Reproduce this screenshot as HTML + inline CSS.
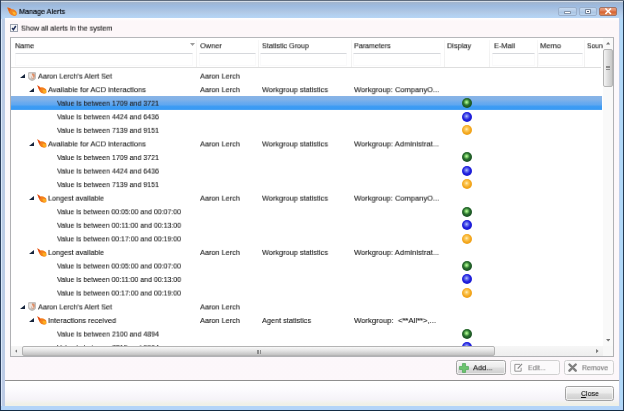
<!DOCTYPE html>
<html><head><meta charset="utf-8"><title>Manage Alerts</title>
<style>
html,body{margin:0;padding:0;}
body{width:624px;height:411px;overflow:hidden;position:relative;background:#b6d3f3;font-family:"Liberation Sans",sans-serif;font-size:8.1px;}
div,span,svg{position:absolute;box-sizing:border-box;}
.t{-webkit-text-stroke:0.12px currentColor;will-change:transform;white-space:nowrap;line-height:12px;height:12px;transform-origin:0 50%;font-size:8.1px;}
#frame{left:0;top:0;width:624px;height:411px;background:#24384f;}
#frame2{left:1px;top:1px;width:621.8px;height:408.9px;background:#dbe8fa;}
#frame3{left:2.2px;top:2px;width:620.5px;height:407.9px;background:linear-gradient(90deg,#bccbe5 0,#bccbe5 4px,#c0d0ec 4px,#c0d0ec 618.3px,#b0d8f8 618.3px);}
#title{left:1px;top:0.7px;width:622px;height:18px;background:linear-gradient(#d4dde8 0,#d4dde8 1px,#a2b5ce 1.2px,#9dbbe0 5px,#a6c1e2 8px,#b1c8e5 11px,#b4d2f2 15px,#b9d6f4 18px);}
#client{left:4.8px;top:18.4px;width:614.2px;height:387.2px;background:linear-gradient(#ffffff 0,#fdf7f9 3px,#fdf7f9 20px,#fcf8fb 60px,#fcf7fa 100%);}
#bottom{left:4.8px;top:380.6px;width:614.2px;height:25px;background:linear-gradient(#ffffff 0,#fbfafd 40%,#f5f3f8 75%,#f0f0e6 92%,#eef0ea 100%);}
#sep{left:4.8px;top:379.6px;width:614.2px;height:1.1px;background:#8e8e8e;}
#grid{left:10px;top:37.3px;width:604px;height:319.9px;background:#fff;border:1px solid #b0b1b4;border-top-color:#b6b7ba;}
#hdrline{left:11px;top:67.4px;width:590px;height:1px;background:#dedede;}
.fb{top:53px;height:12.6px;border:1px solid #fafafb;border-top-color:#d6d8dc;background:#fff;}
.cs{top:40px;height:27.4px;width:1px;background:linear-gradient(#f8f8f8,#f2f2f2 50%,#f0f0f0);}
#sel{left:11px;top:96.2px;width:591.4px;height:13.6px;background:linear-gradient(#88b4e6 0,#82b2e8 25%,#6aaaee 48%,#60a7f0 62%,#3f9cf3 74%,#399af4 90%,#52a5f2 100%);}
.tri{width:0;height:0;border-left:5.2px solid transparent;border-bottom:4.8px solid #16243c;}
.dot{width:10px;height:10px;border-radius:50%;}
.dot.g{background:radial-gradient(circle at 46% 42%,#c4f7aa 0,#86d870 15%,#2c7430 38%,#1c5624 62%,#184a20 100%);}
.dot.b{background:radial-gradient(circle at 46% 42%,#b9c4fa 0,#6d78ee 18%,#2020de 46%,#1515c8 100%);}
.dot.o{background:radial-gradient(circle at 46% 42%,#fff0c4 0,#fdcc60 20%,#f3a71e 52%,#ea9812 100%);}
#vsb{left:602.6px;top:38.3px;width:10.4px;height:308px;background:#f9f9f9;}
#vth{left:603.3px;top:48.6px;width:9.8px;height:38.6px;border:1px solid #b4b4b4;border-radius:2px;background:linear-gradient(90deg,#f4f4f4,#dcdcdc 50%,#c8c8c8);}
#hsb{left:11px;top:345.9px;width:592px;height:10.4px;background:linear-gradient(#f6f6f6,#eeeeee);}
#hth{left:21.8px;top:346.3px;width:473.2px;height:10.2px;border:1px solid #b4b4b4;border-radius:2px;background:linear-gradient(#f8f8f8,#e4e4e4 45%,#c2c2c2);}
#corner{left:602.6px;top:345.9px;width:10.4px;height:10.4px;background:#f7f7f7;}
.btn{height:15.9px;border:1px solid #a2a2a2;border-radius:2.5px;background:linear-gradient(#f5f5f5,#ececec 45%,#dddddd 55%,#cecece);box-shadow:inset 0 0 0 1px rgba(255,255,255,.6);}
.btn.dis{border-color:#d0d0d0;background:#fbfafb;box-shadow:none;}
.wb{top:6.7px;height:9.5px;border:1px solid #9bb0cc;border-radius:2px;}
.tl{left:0;top:0;width:624px;height:411px;}

</style></head>
<body>
<div id="frame"></div><div id="frame2"></div><div id="frame3"></div>
<div id="title"></div>
<div style="left:0;top:0;width:624px;height:0.8px;background:#5f6c7e"></div>
<div style="left:0;top:0;width:1px;height:411px;background:#2c3e5c"></div>
<div style="left:1px;top:405.6px;width:621.7px;height:4.3px;background:#b3d4f8"></div>
<div style="left:0;top:409.8px;width:624px;height:1.2px;background:#132c44"></div>
<svg style="left:6.8px;top:6.8px" width="10.4" height="9.4" viewBox="0 0 10 9"><path d="M0.3 0.5 Q2.8 0.6 4.4 2 Q6.6 2 8.6 3.8 Q9.9 5.4 9.3 7.4 Q8.4 8.9 6 8.5 Q3.4 8 2.2 5.8 Q1 3.4 0.3 0.5 Z" fill="#ee8426"/><path d="M0.3 0.5 Q2.6 0.8 4 2.2 Q3 3 2.6 4.6 Q1.2 3 0.3 0.5 Z" fill="#e0601e"/><path d="M5 4.2 Q7.6 4.2 8.6 6 Q8.8 7.6 7.2 7.8 Q5.6 7.2 5 4.2 Z" fill="#ffb52a"/></svg>
<div class="wb" style="left:558.4px;width:18.2px;background:linear-gradient(#c6daf0,#b2cae6 50%,#a4c0e0 52%,#bcd5ef)"></div>
<div style="left:564px;top:11.3px;width:7px;height:2.6px;background:#fff;border:0.6px solid #8393a8;border-radius:0.5px"></div>
<div class="wb" style="left:579px;width:18px;background:linear-gradient(#c6daf0,#b2cae6 50%,#a4c0e0 52%,#bcd5ef)"></div>
<div style="left:584.8px;top:9.3px;width:6.4px;height:4.8px;background:#f4f6f9;border:0.7px solid #76869c;border-radius:0.8px"></div>
<div style="left:586.7px;top:11.1px;width:2.6px;height:1.2px;background:#4a566a"></div>
<div class="wb" style="left:599.3px;width:18.2px;background:linear-gradient(#e9a485,#e08058 45%,#d6602f 55%,#e08a58);border-color:#a07468"></div>
<svg style="left:605.3px;top:8.4px" width="6.4" height="6.4" viewBox="0 0 8 8"><path d="M1.2 1.2 L6.8 6.8 M6.8 1.2 L1.2 6.8" stroke="#fff" stroke-width="1.9" stroke-linecap="square"/></svg>
<div id="client"></div>
<div id="bottom"></div><div id="sep"></div>
<div style="left:10.1px;top:24px;width:7.8px;height:7.8px;border:0.9px solid #9ea3b0;background:#f6f6f8"></div>
<svg style="left:10.1px;top:24px" width="8" height="8" viewBox="0 0 8 8"><path d="M2.1 4 L3.4 5.7 L5.8 2" fill="none" stroke="#26335e" stroke-width="1.5"/></svg>
<div id="grid"></div>
<div id="hdrline"></div>
<div class="fb" style="left:14.6px;width:178.6px"></div>
<div class="fb" style="left:199px;width:56.6px"></div>
<div class="fb" style="left:260.2px;width:87px"></div>
<div class="fb" style="left:353px;width:87.6px"></div>
<div class="fb" style="left:491.6px;width:43.6px"></div>
<div class="fb" style="left:538.4px;width:44.2px"></div>
<div class="cs" style="left:196.4px"></div><div class="cs" style="left:258px"></div><div class="cs" style="left:350.6px"></div><div class="cs" style="left:444.4px"></div><div class="cs" style="left:489px"></div><div class="cs" style="left:536.8px"></div><div class="cs" style="left:584px"></div>
<svg style="left:190.4px;top:42.8px" width="5" height="3" viewBox="0 0 5 3"><path d="M0 0 L5 0 L2.5 3 Z" fill="#9c9c9c"/></svg>
<div id="sel"></div>
<div class="tri" style="left:20.2px;top:74.10px"></div>
<svg class="ic" style="left:28px;top:71.60px" width="8" height="9" viewBox="0 0 8 9"><path d="M1 0.5 H7 Q7.7 0.5 7.7 1.3 V6 Q7.4 7.8 4.2 8.7 Q1 7.8 0.4 6 V1.3 Q0.4 0.5 1 0.5 Z" fill="#c4c0bc" stroke="#a9a5a2" stroke-width="0.5"/><path d="M1.2 1.4 H4 L3.2 6.6 Q1.6 6 1.2 5 Z" fill="#ece6e2"/><path d="M4 1.6 Q6.2 1.6 6.8 3 Q7 5.4 5 7.2 Q3.6 6.6 3.6 4.8 Z" fill="#e08e68"/><path d="M3.6 2 L5.6 5.4 L4.6 6.6 L3 3.4 Z" fill="#f6eee8" opacity="0.85"/></svg>
<div class="tri" style="left:29.4px;top:87.66px"></div>
<svg class="ic" style="left:36.8px;top:85.06px" width="10" height="9" viewBox="0 0 10 9"><path d="M0.3 0.2 Q2.2 1 3.4 2.4 Q5 1.8 6.2 2.6 Q8.4 3.4 9.2 4.6 Q9.6 6.4 9.3 8 Q7.8 8.9 6.2 8.6 Q4.2 8.2 3 6.8 Q1.6 4.4 0.3 0.2 Z" fill="#f4801c"/><path d="M0.3 0.2 Q2.2 1.2 3.6 3 Q3.2 4.2 3 5.8 Q1.6 3.6 0.3 0.2 Z" fill="#e2481c"/><path d="M5.6 4.8 Q7.6 4.4 9 5.6 Q9.4 7 9 7.8 Q7.4 8.4 6.2 7.6 Q5.4 6.4 5.6 4.8 Z" fill="#fcae1e"/></svg>
<div class="dot g" style="left:461.9px;top:98.12px"></div>
<div class="dot b" style="left:461.9px;top:111.68px"></div>
<div class="dot o" style="left:461.9px;top:125.24px"></div>
<div class="tri" style="left:29.4px;top:141.90px"></div>
<svg class="ic" style="left:36.8px;top:139.30px" width="10" height="9" viewBox="0 0 10 9"><path d="M0.3 0.2 Q2.2 1 3.4 2.4 Q5 1.8 6.2 2.6 Q8.4 3.4 9.2 4.6 Q9.6 6.4 9.3 8 Q7.8 8.9 6.2 8.6 Q4.2 8.2 3 6.8 Q1.6 4.4 0.3 0.2 Z" fill="#f4801c"/><path d="M0.3 0.2 Q2.2 1.2 3.6 3 Q3.2 4.2 3 5.8 Q1.6 3.6 0.3 0.2 Z" fill="#e2481c"/><path d="M5.6 4.8 Q7.6 4.4 9 5.6 Q9.4 7 9 7.8 Q7.4 8.4 6.2 7.6 Q5.4 6.4 5.6 4.8 Z" fill="#fcae1e"/></svg>
<div class="dot g" style="left:461.9px;top:152.36px"></div>
<div class="dot b" style="left:461.9px;top:165.92px"></div>
<div class="dot o" style="left:461.9px;top:179.48px"></div>
<div class="tri" style="left:29.4px;top:196.14px"></div>
<svg class="ic" style="left:36.8px;top:193.54px" width="10" height="9" viewBox="0 0 10 9"><path d="M0.3 0.2 Q2.2 1 3.4 2.4 Q5 1.8 6.2 2.6 Q8.4 3.4 9.2 4.6 Q9.6 6.4 9.3 8 Q7.8 8.9 6.2 8.6 Q4.2 8.2 3 6.8 Q1.6 4.4 0.3 0.2 Z" fill="#f4801c"/><path d="M0.3 0.2 Q2.2 1.2 3.6 3 Q3.2 4.2 3 5.8 Q1.6 3.6 0.3 0.2 Z" fill="#e2481c"/><path d="M5.6 4.8 Q7.6 4.4 9 5.6 Q9.4 7 9 7.8 Q7.4 8.4 6.2 7.6 Q5.4 6.4 5.6 4.8 Z" fill="#fcae1e"/></svg>
<div class="dot g" style="left:461.9px;top:206.60px"></div>
<div class="dot b" style="left:461.9px;top:220.16px"></div>
<div class="dot o" style="left:461.9px;top:233.72px"></div>
<div class="tri" style="left:29.4px;top:250.38px"></div>
<svg class="ic" style="left:36.8px;top:247.78px" width="10" height="9" viewBox="0 0 10 9"><path d="M0.3 0.2 Q2.2 1 3.4 2.4 Q5 1.8 6.2 2.6 Q8.4 3.4 9.2 4.6 Q9.6 6.4 9.3 8 Q7.8 8.9 6.2 8.6 Q4.2 8.2 3 6.8 Q1.6 4.4 0.3 0.2 Z" fill="#f4801c"/><path d="M0.3 0.2 Q2.2 1.2 3.6 3 Q3.2 4.2 3 5.8 Q1.6 3.6 0.3 0.2 Z" fill="#e2481c"/><path d="M5.6 4.8 Q7.6 4.4 9 5.6 Q9.4 7 9 7.8 Q7.4 8.4 6.2 7.6 Q5.4 6.4 5.6 4.8 Z" fill="#fcae1e"/></svg>
<div class="dot g" style="left:461.9px;top:260.84px"></div>
<div class="dot b" style="left:461.9px;top:274.40px"></div>
<div class="dot o" style="left:461.9px;top:287.96px"></div>
<div class="tri" style="left:20.2px;top:304.62px"></div>
<svg class="ic" style="left:28px;top:302.12px" width="8" height="9" viewBox="0 0 8 9"><path d="M1 0.5 H7 Q7.7 0.5 7.7 1.3 V6 Q7.4 7.8 4.2 8.7 Q1 7.8 0.4 6 V1.3 Q0.4 0.5 1 0.5 Z" fill="#c4c0bc" stroke="#a9a5a2" stroke-width="0.5"/><path d="M1.2 1.4 H4 L3.2 6.6 Q1.6 6 1.2 5 Z" fill="#ece6e2"/><path d="M4 1.6 Q6.2 1.6 6.8 3 Q7 5.4 5 7.2 Q3.6 6.6 3.6 4.8 Z" fill="#e08e68"/><path d="M3.6 2 L5.6 5.4 L4.6 6.6 L3 3.4 Z" fill="#f6eee8" opacity="0.85"/></svg>
<div class="tri" style="left:29.4px;top:318.18px"></div>
<svg class="ic" style="left:36.8px;top:315.58px" width="10" height="9" viewBox="0 0 10 9"><path d="M0.3 0.2 Q2.2 1 3.4 2.4 Q5 1.8 6.2 2.6 Q8.4 3.4 9.2 4.6 Q9.6 6.4 9.3 8 Q7.8 8.9 6.2 8.6 Q4.2 8.2 3 6.8 Q1.6 4.4 0.3 0.2 Z" fill="#f4801c"/><path d="M0.3 0.2 Q2.2 1.2 3.6 3 Q3.2 4.2 3 5.8 Q1.6 3.6 0.3 0.2 Z" fill="#e2481c"/><path d="M5.6 4.8 Q7.6 4.4 9 5.6 Q9.4 7 9 7.8 Q7.4 8.4 6.2 7.6 Q5.4 6.4 5.6 4.8 Z" fill="#fcae1e"/></svg>
<div class="dot g" style="left:461.9px;top:328.64px"></div>
<div class="dot b" style="left:461.9px;top:342.20px"></div>
<div class="tl">
<span class="t" style="left:15.0px;top:40px;color:#1a1a1a;transform:translateY(0.20px) scaleX(0.8891);">Name</span>
<span class="t" style="left:200.3px;top:40px;color:#1a1a1a;transform:translateY(0.20px) scaleX(0.9101);">Owner</span>
<span class="t" style="left:262.0px;top:40px;color:#1a1a1a;transform:translateY(0.20px) scaleX(0.8852);">Statistic Group</span>
<span class="t" style="left:354.3px;top:40px;color:#1a1a1a;transform:translateY(0.20px) scaleX(0.8771);">Parameters</span>
<span class="t" style="left:447.0px;top:40px;color:#1a1a1a;transform:translateY(0.20px) scaleX(0.9041);">Display</span>
<span class="t" style="left:494.0px;top:40px;color:#1a1a1a;transform:translateY(0.20px) scaleX(0.9155);">E-Mail</span>
<span class="t" style="left:540.0px;top:40px;color:#1a1a1a;transform:translateY(0.20px) scaleX(0.9333);">Memo</span>
<span class="t" style="left:587.0px;top:40px;color:#1a1a1a;transform:translateY(0.20px) scaleX(0.8198);">Sound</span>
<span class="t" style="left:38.2px;top:70px;color:#1a1a1a;transform:translateY(0.60px) scaleX(0.8966);white-space:pre;">Aaron Lerch&#x27;s Alert Set</span>
<span class="t" style="left:200.3px;top:70px;color:#1a1a1a;transform:translateY(0.60px) scaleX(0.9072);">Aaron Lerch</span>
<span class="t" style="left:47.6px;top:84px;color:#1a1a1a;transform:translateY(0.16px) scaleX(0.9166);white-space:pre;">Available for ACD interactions</span>
<span class="t" style="left:200.3px;top:84px;color:#1a1a1a;transform:translateY(0.16px) scaleX(0.9072);">Aaron Lerch</span>
<span class="t" style="left:262.2px;top:84px;color:#1a1a1a;transform:translateY(0.16px) scaleX(0.9076);">Workgroup statistics</span>
<span class="t" style="left:354.3px;top:84px;color:#1a1a1a;transform:translateY(0.16px) scaleX(0.9310);white-space:pre;">Workgroup: CompanyO...</span>
<span class="t" style="left:57.2px;top:97px;color:#1a1a1a;transform:translateY(0.72px) scaleX(0.8695);white-space:pre;">Value is between 1709 and 3721</span>
<span class="t" style="left:57.2px;top:111px;color:#1a1a1a;transform:translateY(0.28px) scaleX(0.8695);white-space:pre;">Value is between 4424 and 6436</span>
<span class="t" style="left:57.2px;top:124px;color:#1a1a1a;transform:translateY(0.84px) scaleX(0.8695);white-space:pre;">Value is between 7139 and 9151</span>
<span class="t" style="left:47.6px;top:138px;color:#1a1a1a;transform:translateY(0.40px) scaleX(0.9166);white-space:pre;">Available for ACD interactions</span>
<span class="t" style="left:200.3px;top:138px;color:#1a1a1a;transform:translateY(0.40px) scaleX(0.9072);">Aaron Lerch</span>
<span class="t" style="left:262.2px;top:138px;color:#1a1a1a;transform:translateY(0.40px) scaleX(0.9076);">Workgroup statistics</span>
<span class="t" style="left:354.3px;top:138px;color:#1a1a1a;transform:translateY(0.40px) scaleX(0.9370);white-space:pre;">Workgroup: Administrat...</span>
<span class="t" style="left:57.2px;top:151px;color:#1a1a1a;transform:translateY(0.96px) scaleX(0.8695);white-space:pre;">Value is between 1709 and 3721</span>
<span class="t" style="left:57.2px;top:165px;color:#1a1a1a;transform:translateY(0.52px) scaleX(0.8695);white-space:pre;">Value is between 4424 and 6436</span>
<span class="t" style="left:57.2px;top:179px;color:#1a1a1a;transform:translateY(0.08px) scaleX(0.8695);white-space:pre;">Value is between 7139 and 9151</span>
<span class="t" style="left:47.6px;top:192px;color:#1a1a1a;transform:translateY(0.64px) scaleX(0.8889);white-space:pre;">Longest available</span>
<span class="t" style="left:200.3px;top:192px;color:#1a1a1a;transform:translateY(0.64px) scaleX(0.9072);">Aaron Lerch</span>
<span class="t" style="left:262.2px;top:192px;color:#1a1a1a;transform:translateY(0.64px) scaleX(0.9076);">Workgroup statistics</span>
<span class="t" style="left:354.3px;top:192px;color:#1a1a1a;transform:translateY(0.64px) scaleX(0.9310);white-space:pre;">Workgroup: CompanyO...</span>
<span class="t" style="left:57.2px;top:206px;color:#1a1a1a;transform:translateY(0.20px) scaleX(0.8592);white-space:pre;">Value is between 00:05:00 and 00:07:00</span>
<span class="t" style="left:57.2px;top:219px;color:#1a1a1a;transform:translateY(0.76px) scaleX(0.8629);white-space:pre;">Value is between 00:11:00 and 00:13:00</span>
<span class="t" style="left:57.2px;top:233px;color:#1a1a1a;transform:translateY(0.32px) scaleX(0.8592);white-space:pre;">Value is between 00:17:00 and 00:19:00</span>
<span class="t" style="left:47.6px;top:246px;color:#1a1a1a;transform:translateY(0.88px) scaleX(0.8889);white-space:pre;">Longest available</span>
<span class="t" style="left:200.3px;top:246px;color:#1a1a1a;transform:translateY(0.88px) scaleX(0.9072);">Aaron Lerch</span>
<span class="t" style="left:262.2px;top:246px;color:#1a1a1a;transform:translateY(0.88px) scaleX(0.9076);">Workgroup statistics</span>
<span class="t" style="left:354.3px;top:246px;color:#1a1a1a;transform:translateY(0.88px) scaleX(0.9370);white-space:pre;">Workgroup: Administrat...</span>
<span class="t" style="left:57.2px;top:260px;color:#1a1a1a;transform:translateY(0.44px) scaleX(0.8592);white-space:pre;">Value is between 00:05:00 and 00:07:00</span>
<span class="t" style="left:57.2px;top:274px;color:#1a1a1a;transform:translateY(0.00px) scaleX(0.8629);white-space:pre;">Value is between 00:11:00 and 00:13:00</span>
<span class="t" style="left:57.2px;top:287px;color:#1a1a1a;transform:translateY(0.56px) scaleX(0.8592);white-space:pre;">Value is between 00:17:00 and 00:19:00</span>
<span class="t" style="left:38.2px;top:301px;color:#1a1a1a;transform:translateY(0.42px) scaleX(0.8966);white-space:pre;">Aaron Lerch&#x27;s Alert Set</span>
<span class="t" style="left:200.3px;top:301px;color:#1a1a1a;transform:translateY(0.42px) scaleX(0.9072);">Aaron Lerch</span>
<span class="t" style="left:47.6px;top:314px;color:#1a1a1a;transform:translateY(0.98px) scaleX(0.9105);white-space:pre;">Interactions received</span>
<span class="t" style="left:200.3px;top:314px;color:#1a1a1a;transform:translateY(0.98px) scaleX(0.9072);">Aaron Lerch</span>
<span class="t" style="left:262.2px;top:314px;color:#1a1a1a;transform:translateY(0.98px) scaleX(0.9001);">Agent statistics</span>
<span class="t" style="left:354.3px;top:314px;color:#1a1a1a;transform:translateY(0.98px) scaleX(0.9509);white-space:pre;">Workgroup:  &lt;**All**&gt;,...</span>
<span class="t" style="left:57.2px;top:328px;color:#1a1a1a;transform:translateY(0.54px) scaleX(0.8695);white-space:pre;">Value is between 2100 and 4894</span>
<span class="t" style="left:57.2px;top:342px;color:#1a1a1a;transform:translateY(0.10px) scaleX(0.8695);white-space:pre;">Value is between 7315 and 9904</span>
</div>
<div id="vsb"></div><div id="vth"></div>
<svg style="left:606px;top:42.2px" width="4.4" height="2.6" viewBox="0 0 5 3"><path d="M0 3 L5 3 L2.5 0 Z" fill="#747474"/></svg>
<svg style="left:606px;top:339px" width="4.4" height="2.6" viewBox="0 0 5 3"><path d="M0 0 L5 0 L2.5 3 Z" fill="#747474"/></svg>
<div style="left:606px;top:65.6px;width:4px;height:0.8px;background:#8c8c8c"></div><div style="left:606px;top:67.2px;width:4px;height:0.8px;background:#8c8c8c"></div><div style="left:606px;top:68.8px;width:4px;height:0.8px;background:#8c8c8c"></div>
<div id="hsb"></div><div id="hth"></div><div id="corner"></div>
<svg style="left:14.8px;top:349.4px" width="2.6" height="4.2" viewBox="0 0 3 5"><path d="M3 0 L3 5 L0 2.5 Z" fill="#747474"/></svg>
<svg style="left:596.4px;top:349.4px" width="2.6" height="4.2" viewBox="0 0 3 5"><path d="M0 0 L0 5 L3 2.5 Z" fill="#747474"/></svg>
<div style="left:256.6px;top:349.5px;width:0.8px;height:4px;background:#8c8c8c"></div><div style="left:258.2px;top:349.5px;width:0.8px;height:4px;background:#8c8c8c"></div><div style="left:259.8px;top:349.5px;width:0.8px;height:4px;background:#8c8c8c"></div>

<div class="btn" style="left:455.8px;top:359.6px;width:50px"></div>
<svg style="left:459px;top:362.6px" width="10" height="10" viewBox="0 0 11 11"><path d="M3.8 0.6 H7.2 V3.8 H10.4 V7.2 H7.2 V10.4 H3.8 V7.2 H0.6 V3.8 H3.8 Z" fill="#6cc46e" stroke="#4ea75a" stroke-width="0.8"/></svg>
<div class="btn dis" style="left:510.4px;top:359.6px;width:49.6px"></div>
<svg style="left:514px;top:363px" width="9.4" height="9.4" viewBox="0 0 11 11"><path d="M1 1.6 H7 M1 1.6 V9.6 H8.4 V5.6" fill="none" stroke="#8e8e8e" stroke-width="1.1"/><path d="M4.4 6.6 L9.4 1" stroke="#888" stroke-width="1.4"/></svg>
<div class="btn dis" style="left:564.4px;top:359.6px;width:49.6px"></div>
<svg style="left:568px;top:363px" width="9.2" height="9.2" viewBox="0 0 10 10"><path d="M1.6 1.6 L8.4 8.4 M8.4 1.6 L1.6 8.4" stroke="#808080" stroke-width="2.6" stroke-linecap="round"/></svg>
<div class="btn" style="left:564.5px;top:385.5px;width:49.4px;height:15.1px"></div>
<div class="tl">
<span class="t" style="left:18.9px;top:5px;color:#060a10;transform:translateY(0.90px) scaleX(0.8889);-webkit-text-stroke:0.2px #060a10;">Manage Alerts</span>
<span class="t" style="left:20.5px;top:22px;color:#1a1a1a;transform:translateY(0.60px) scaleX(0.8920);">Show all alerts in the system</span>
<span class="t" style="left:472.6px;top:362px;color:#101010;transform:translateY(0.20px) scaleX(0.9170);">Add...</span>
<span class="t" style="left:527.6px;top:362px;color:#808080;transform:translateY(0.20px) scaleX(0.8598);">Edit...</span>
<span class="t" style="left:581.6px;top:362px;color:#767676;transform:translateY(0.20px) scaleX(0.8626);">Remove</span>
<span class="t" style="left:580.6px;top:388px;color:#101010;transform:translateY(0.00px) scaleX(0.8598);"><u>C</u>lose</span>
</div>

</body></html>
